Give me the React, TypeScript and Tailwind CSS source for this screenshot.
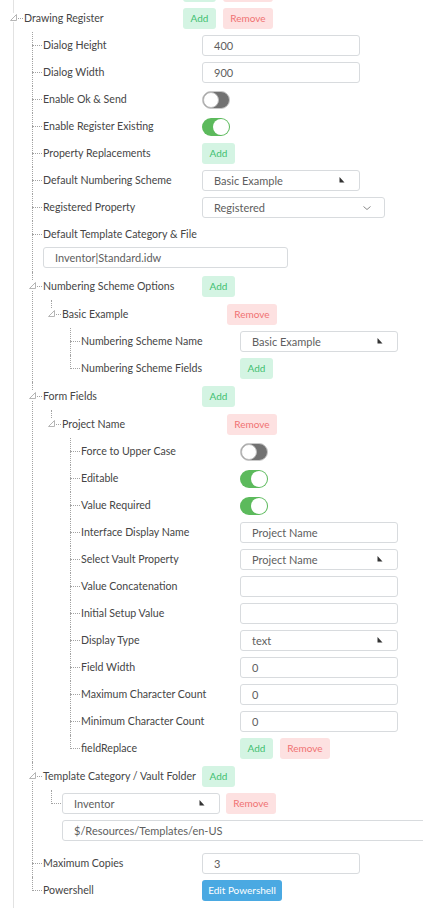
import React from "react";

type Level = 1 | 2 | 3 | 4;

const LINE_LEFT: Record<Level, string> = {
  1: "left-[13px]",
  2: "left-[32px]",
  3: "left-[51px]",
  4: "left-[70px]",
};
const ICON_LEFT: Record<Level, string> = {
  1: "left-[9px]",
  2: "left-[28px]",
  3: "left-[47px]",
  4: "left-[66px]",
};
const PAD: Record<Level, string> = {
  1: "pl-[24px]",
  2: "pl-[43px]",
  3: "pl-[62px]",
  4: "pl-[81px]",
};
const LABEL_W: Record<Level, string> = {
  1: "w-[159px]",
  2: "w-[159px]",
  3: "w-[165px]",
  4: "w-[159px]",
};

const dotV = "border-l border-dotted border-[#a3a3a3]";
const dotH = "border-t border-dotted border-[#a3a3a3]";

function ExpandIcon({ level }: { level: Level }) {
  return (
    <span className={`absolute ${ICON_LEFT[level]} top-[9px] w-[9px] h-[9px] bg-white`}>
      <svg width="9" height="9" viewBox="0 0 9 9">
        <polygon points="7.5,1.5 7.5,7.5 1.5,7.5" fill="#fff" stroke="#b5b5b5" strokeWidth="1" />
      </svg>
    </span>
  );
}

function Node({
  level,
  label,
  control,
  last,
  expandable,
  children,
  noLine = false,
}: {
  level: Level;
  label: React.ReactNode;
  control?: React.ReactNode;
  last?: boolean;
  expandable?: boolean;
  children?: React.ReactNode;
  noLine?: boolean;
}) {
  const tall = expandable;
  return (
    <div className="relative">
      {!noLine && (
        <span className={`absolute ${LINE_LEFT[level]} top-0 ${last ? "h-[14px]" : "h-full"} ${dotV}`} />
      )}
      <span
        className={`absolute ${LINE_LEFT[level]} ${tall ? "top-[14px]" : "top-[13px]"} w-[10px] ${dotH}`}
      />
      {expandable && <ExpandIcon level={level} />}
      <div className={`flex items-center ${tall ? "h-[28px]" : "h-[27px]"} ${PAD[level]}`}>
        <div className={`${LABEL_W[level]} shrink-0 whitespace-nowrap pt-[1px] text-[10.6px] text-[#454545]`}>
          {label}
        </div>
        {control}
      </div>
      {children}
    </div>
  );
}

function Add() {
  return (
    <button className="w-[33px] h-[21px] rounded-[3px] bg-[#d4f4e3] text-[#3fbf70] text-[10px] flex items-center justify-center">
      Add
    </button>
  );
}
function Remove() {
  return (
    <button className="w-[50px] h-[21px] rounded-[3px] bg-[#fde1e1] text-[#f07272] text-[10px] flex items-center justify-center">
      Remove
    </button>
  );
}

function Toggle({ on }: { on?: boolean }) {
  return on ? (
    <div className="w-[28px] h-[18px] rounded-full bg-[#5cba5c] relative">
      <div className="absolute right-[1px] top-[1px] w-[16px] h-[16px] rounded-full bg-white" />
    </div>
  ) : (
    <div className="w-[28px] h-[18px] rounded-full bg-[#727272] relative border border-[#c9c9c9]">
      <div className="absolute left-0 top-0 w-[16px] h-[16px] rounded-full bg-white border border-[#bdbdbd]" />
    </div>
  );
}

function Input({ value = "", w = "w-[158px]" }: { value?: string; w?: string }) {
  return (
    <div
      className={`${w} h-[21px] shrink-0 border border-[#d8dbde] rounded-[3px] pl-[11px] pt-[1px] flex items-center text-[11px] text-[#5e5e5e] bg-white`}
    >
      {value}
    </div>
  );
}

function Pointer() {
  return (
    <svg width="6" height="6" viewBox="0 0 6 6" className="absolute right-[14px] top-[6px]">
      <polygon points="0.5,0 0.5,5.5 5.5,5.5" fill="#333" />
    </svg>
  );
}

function Select({ value, w = "w-[158px]" }: { value: string; w?: string }) {
  return (
    <div
      className={`${w} h-[21px] shrink-0 relative border border-[#d8dbde] rounded-[3px] pl-[11px] pt-[1px] flex items-center text-[11px] text-[#5e5e5e] bg-white`}
    >
      {value}
      <Pointer />
    </div>
  );
}

function Dropdown({ value }: { value: string }) {
  return (
    <div className="w-[183px] h-[21px] shrink-0 relative border border-[#d8dbde] rounded-[3px] pl-[11px] pt-[1px] flex items-center text-[11px] text-[#5e5e5e] bg-white">
      {value}
      <svg width="10" height="10" viewBox="0 0 10 10" className="absolute right-[12px] top-[5px]">
        <polyline points="1.5,3.5 5,6.5 8.5,3.5" fill="none" stroke="#8a8a8a" strokeWidth="1" />
      </svg>
    </div>
  );
}

function Gap2({ children }: { children: React.ReactNode }) {
  return <div className="flex items-center gap-[7px]">{children}</div>;
}

export default function App() {
  return (
    <div
      className="relative w-[423px] h-[908px] overflow-hidden bg-white"
      style={{ fontFamily: "Lato, 'Liberation Sans', sans-serif" }}
    >
      <span className="absolute left-[13px] top-0 h-full border-l border-[#e2e2e2]" />
      {/* bottom edges of the buttons of the row above, scrolled out of view */}
      <div className="h-[4px] overflow-hidden flex items-end pb-[2px] pl-[183px]">
        <div className="flex items-end gap-[7px]">
          <div className="w-[33px] h-[21px] rounded-[3px] bg-[#d4f4e3]" />
          <div className="w-[50px] h-[21px] rounded-[3px] bg-[#fde1e1]" />
        </div>
      </div>

      <Node
        level={1}
        noLine
        expandable
        label="Drawing Register"
        control={
          <Gap2>
            <Add />
            <Remove />
          </Gap2>
        }
      >
        <Node level={2} label="Dialog Height" control={<Input value="400" />} />
        <Node level={2} label="Dialog Width" control={<Input value="900" />} />
        <Node level={2} label="Enable Ok & Send" control={<Toggle />} />
        <Node level={2} label="Enable Register Existing" control={<Toggle on />} />
        <Node level={2} label="Property Replacements" control={<Add />} />
        <Node level={2} label="Default Numbering Scheme" control={<Select value="Basic Example" />} />
        <Node level={2} label="Registered Property" control={<Dropdown value="Registered" />} />
        <Node level={2} label="Default Template Category & File">
          <div className="h-[24px] pl-[43px] flex items-start">
            <div className="mt-[-1px]">
              <Input value="Inventor|Standard.idw" w="w-[245px]" />
            </div>
          </div>
        </Node>
        <Node level={2} expandable label="Numbering Scheme Options" control={<Add />}>
          <Node level={3} expandable last label="Basic Example" control={<Remove />}>
            <Node level={4} label="Numbering Scheme Name" control={<Select value="Basic Example" />} />
            <Node level={4} last label="Numbering Scheme Fields" control={<Add />} />
          </Node>
        </Node>
        <Node level={2} expandable label="Form Fields" control={<Add />}>
          <Node level={3} expandable last label="Project Name" control={<Remove />}>
            <Node level={4} label="Force to Upper Case" control={<Toggle />} />
            <Node level={4} label="Editable" control={<Toggle on />} />
            <Node level={4} label="Value Required" control={<Toggle on />} />
            <Node level={4} label="Interface Display Name" control={<Input value="Project Name" />} />
            <Node level={4} label="Select Vault Property" control={<Select value="Project Name" />} />
            <Node level={4} label="Value Concatenation" control={<Input />} />
            <Node level={4} label="Initial Setup Value" control={<Input />} />
            <Node level={4} label="Display Type" control={<Select value="text" />} />
            <Node level={4} label="Field Width" control={<Input value="0" />} />
            <Node level={4} label="Maximum Character Count" control={<Input value="0" />} />
            <Node level={4} label="Minimum Character Count" control={<Input value="0" />} />
            <Node
              level={4}
              last
              label="fieldReplace"
              control={
                <Gap2>
                  <Add />
                  <Remove />
                </Gap2>
              }
            />
          </Node>
        </Node>
        <Node level={2} expandable label="Template Category / Vault Folder" control={<Add />}>
          <div className="relative">
            <span className={`absolute left-[51px] top-0 h-[14px] ${dotV}`} />
            <span className={`absolute left-[51px] top-[13px] w-[10px] ${dotH}`} />
            <div className="h-[27px] pl-[62px] flex items-center gap-[6px]">
              <Select value="Inventor" />
              <Remove />
            </div>
          </div>
          <div className="h-[33px] pl-[62px] pt-[3px]">
            <Input value="$/Resources/Templates/en-US" w="w-[380px]" />
          </div>
        </Node>
        <Node level={2} label="Maximum Copies" control={<Input value="3" />} />
        <Node
          level={2}
          last
          label="Powershell"
          control={
            <button className="w-[80px] h-[21px] rounded-[3px] bg-[#4aa9e2] text-white text-[10px] flex items-center justify-center">
              Edit Powershell
            </button>
          }
        />
      </Node>
    </div>
  );
}
